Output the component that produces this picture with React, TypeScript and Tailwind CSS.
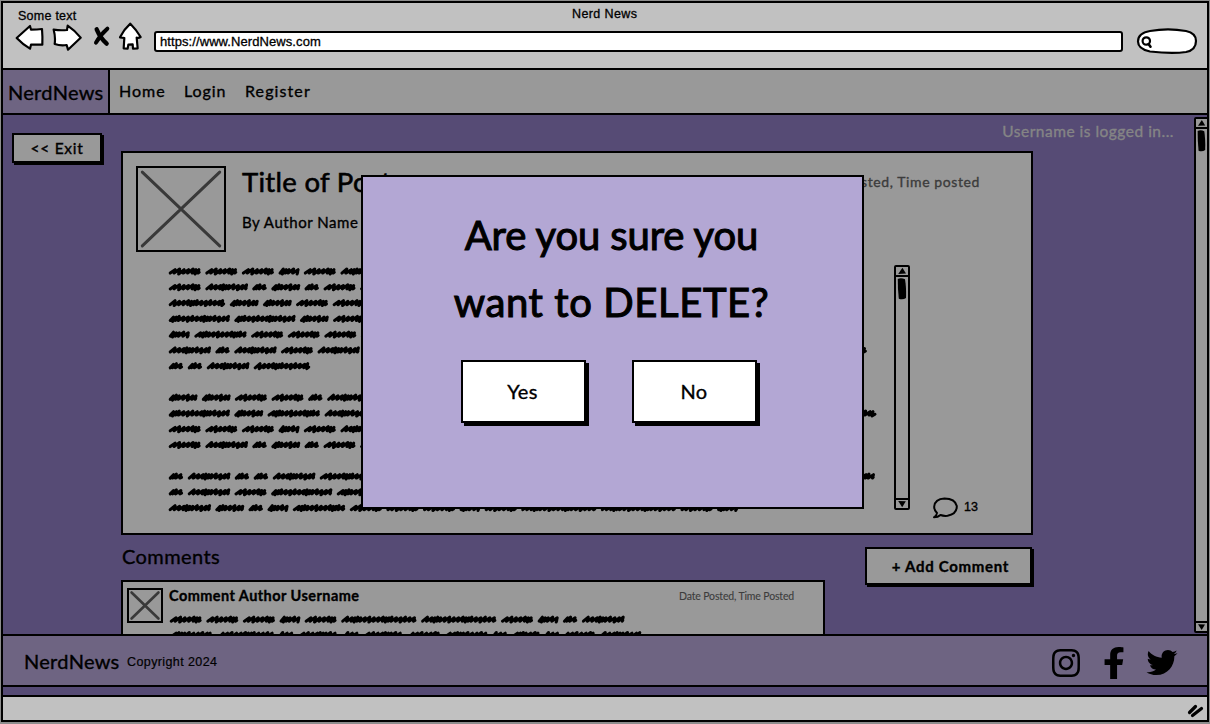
import React from "react";
import { FaFacebookF, FaInstagram, FaTwitter } from "react-icons/fa";

const GAP = 4.6;

function wordPath(x: number, y: number, width: number): string {
  const end = x + width - 0.8;
  let cx = x + 2.2;
  let d = `M${cx} ${y + 1.6}`;
  let i = Math.round(width);
  while (cx < end - 2.5) {
    const dense = i % 8 > 4;
    const step = dense ? 2.9 : 4.5;
    const top = y - (i % 3 === 0 ? 2.5 : 1.8);
    const bottom = y + (i % 4 === 1 ? 2.5 : 1.6);
    const nx = Math.min(cx + step, end);
    d += `L${(nx + 0.4).toFixed(1)} ${top.toFixed(1)}L${(nx - 0.6).toFixed(1)} ${bottom.toFixed(1)}`;
    cx = nx;
    i += 1;
  }
  return d + `L${end} ${y + 0.8}`;
}

function Scribble({ lines, className }: { lines: { y: number; words: number[] }[]; className: string }) {
  return (
    <svg className={className} fill="none" stroke="#000" strokeWidth="3" strokeLinecap="round" strokeLinejoin="round">
      {lines.map(({ y, words }) => {
        let x = 0;
        return words.map((w, i) => {
          const d = wordPath(x, y, w);
          x += w + GAP;
          return <path key={`${y}-${i}`} d={d} />;
        });
      })}
    </svg>
  );
}

const POST_LINES = [
  { y: 6.5, words: [32, 32, 32, 20.7, 32, 75, 75, 32, 20.5, 14, 42] },
  { y: 22.3, words: [32, 42.4, 14.4, 28.6, 14.4, 32, 42, 28, 52, 32] },
  { y: 38.1, words: [56.5, 28.5, 28.5, 32, 32, 61, 28, 42, 75] },
  { y: 53.9, words: [61, 61, 28.5, 32, 32, 52, 42, 14, 28] },
  { y: 69.6, words: [21, 52.2, 32, 32, 32, 61, 28, 42, 56] },
  { y: 85.4, words: [42, 14.4, 42, 32, 42, 61, 28, 75, 75, 32, 42, 52, 52, 49] },
  { y: 101.2, words: [14.4, 14.4, 42.4, 56.5] },
  { y: 132.7, words: [28.5, 28.5, 32, 32, 14.4, 42, 42, 61, 28, 75] },
  { y: 148.5, words: [61, 28.6, 52.4, 42, 61, 32, 42, 14, 75, 75, 32, 28, 61, 44] },
  { y: 164.2, words: [32, 32, 32, 20.7, 32, 75, 75, 32, 20.5] },
  { y: 180, words: [32, 42.4, 14.4, 28.6, 14.4, 32, 42, 61] },
  { y: 211.5, words: [14.4, 42.4, 14.4, 14.4, 42.4, 56, 42, 75, 32, 61, 28, 42, 61, 32, 28, 52] },
  { y: 227.3, words: [14.4, 42.2, 32, 61, 28, 42, 61, 32] },
  { y: 243.1, words: [42, 28.6, 14.4, 20.7, 52.4, 32, 32, 32, 20.5, 32, 75, 75, 32, 21] },
];

const COMMENT_LINES = [
  { y: 5.6, words: [32, 32, 32, 20.5, 32, 75.3, 75.3, 32, 20.7, 14.4, 42.4] },
  { y: 21, words: [44, 55, 15, 41, 15, 41, 31, 43, 15, 28, 15, 31, 42] },
];

function Placeholder({ className, inset, stroke }: { className: string; inset: number; stroke: number }) {
  return (
    <div className={className}>
      <svg className="block h-full w-full" viewBox="0 0 100 100" preserveAspectRatio="none" stroke="#393939" strokeLinecap="round">
        <path
          d={`M${inset} ${inset}L${100 - inset} ${100 - inset}M${100 - inset} ${inset}L${inset} ${100 - inset}`}
          strokeWidth={stroke}
          vectorEffect="non-scaling-stroke"
        />
      </svg>
    </div>
  );
}

function ScrollBar({ className }: { className: string }) {
  return (
    <div className={`flex flex-col items-stretch rounded-[2px] border-2 border-black bg-[#999999] ${className}`}>
      <svg className="block h-[8px] w-full" viewBox="0 0 12 8">
        <path d="M6.4 0.8L10 6.6L2.2 6.9Z" />
      </svg>
      <div className="h-[2px] bg-black" />
      <svg className="block h-[24px] w-full" viewBox="0 0 12 24" preserveAspectRatio="none">
        <path d="M1.8 2Q5 0.6 9 2.2Q10.4 10 10 21Q7 23.2 2.8 21.8Q1.7 12 1.8 2Z" />
      </svg>
      <div className="grow" />
      <div className="h-[2px] bg-black" />
      <svg className="block h-[8px] w-full" viewBox="0 0 12 8">
        <path d="M2.2 1L9.8 1.2L6.2 7.2Z" />
      </svg>
    </div>
  );
}

function BrowserHeader() {
  return (
    <header className="flex h-[67px] shrink-0 flex-col border-b-2 border-black bg-[#c1c1c1] font-['Liberation_Sans',Arial,sans-serif] [-webkit-text-stroke-width:0.3px]">
      <div className="grid h-[18px] grid-cols-[1fr_auto_1fr] text-[12.5px] leading-none">
        <span className="mt-[7px] pl-[15px] tracking-[0.25px]">Some text</span>
        <span className="mt-[5px] w-[66px] tracking-[0.4px] whitespace-nowrap">Nerd News</span>
      </div>
      <div className="flex pl-[12px]">
        <svg className="mt-[2px] h-[28px] w-[29px]" viewBox="45 68 87 84" fill="#fff" stroke="#000" strokeWidth="6.5" strokeLinejoin="round">
          <path d="M50 113L90 77L93 88Q112 88 126 86Q128 110 127 133L93 133L90 145Q68 132 50 113Z" />
        </svg>
        <svg className="mt-[2px] ml-[8px] h-[28px] w-[30px]" viewBox="156 68 90 84" fill="#fff" stroke="#000" strokeWidth="6.5" strokeLinejoin="round">
          <path d="M161 88Q182 91 201 89L203 76Q224 90 242 112L204 148L200 134Q182 137 164 131Q167 110 161 88Z" />
        </svg>
        <svg className="mt-[2px] ml-[11px] h-[28px] w-[18px]" viewBox="280 68 54 84" fill="none" stroke="#000" strokeLinecap="round">
          <path d="M291 87Q302 113 321 130" strokeWidth="13" />
          <path d="M323 85Q302 103 289 127" strokeWidth="12" />
        </svg>
        <svg className="mt-[1px] ml-[7px] h-[29px] w-[25px]" viewBox="353 68 75 87" fill="#fff" stroke="#000" strokeWidth="6.5" strokeLinejoin="round">
          <path d="M390 73Q407 90 421 113Q415 117 409 115L412 147L398 148L397 135L384 136L382 148L370 147L372 116L359 114Q371 90 390 73Z" />
        </svg>
        <div className="mt-[10px] ml-[11px] h-[21px] w-[969px] rounded-[3px] border-2 border-black bg-white pt-[2px] pl-[4px] text-[13px] leading-none tracking-[0.08px]">
          https://www.NerdNews.com
        </div>
        <svg className="mt-[7px] ml-[13px] h-[27px] w-[62px]" viewBox="0 0 62 27" fill="none" stroke="#000" strokeWidth="2.2" strokeLinecap="round">
          <path d="M14 3Q32 -0.3 50 3Q60 5 60 13Q60 22 50 24Q36 26 14 23.5Q2 21 2 13.5Q2 5 14 3Z" fill="#fff" />
          <circle cx="10.3" cy="13" r="3.7" />
          <path d="M12.5 16L14.5 18.7" strokeWidth="2.6" />
        </svg>
      </div>
    </header>
  );
}

function NavBar() {
  return (
    <nav className="flex h-[45px] shrink-0 border-b-2 border-black bg-[#999999] text-[16px] leading-none">
      <div className="w-[107px] border-r-2 border-black bg-[#6e6482] pt-[12px] pl-[5px] text-[20px] leading-none tracking-[0.3px]">
        NerdNews
      </div>
      <a className="mt-[13px] ml-[9px] w-[65px] tracking-[1px]">Home</a>
      <a className="mt-[13px] w-[61px] tracking-[0.9px]">Login</a>
      <a className="mt-[13px] tracking-[1.1px]">Register</a>
    </nav>
  );
}

function PostCard() {
  return (
    <article className="h-[384px] w-[912px] border-2 border-black bg-[#999999] pt-[13px] pl-[13px]">
      <div className="flex">
        <Placeholder className="h-[86px] w-[90px] border-2 border-black" inset={5} stroke={3} />
        <div className="ml-[16px] w-[596px] leading-none">
          <h1 className="pt-[2px] text-[27.5px] leading-none tracking-[0.3px] [-webkit-text-stroke-width:0.6px]">Title of Post</h1>
          <p className="mt-[19px] text-[15px] leading-none tracking-[0.55px]">By Author Name</p>
        </div>
        <p className="mt-[9px] flex w-[142px] justify-end text-[14px] leading-none tracking-[0.6px] whitespace-nowrap text-[#3c3c3c]">
          Date posted, Time posted
        </p>
      </div>
      <div className="mt-[13px] flex">
        <Scribble className="ml-[32px] h-[252px] w-[726px]" lines={POST_LINES} />
        <ScrollBar className="h-[245px] w-[16px]" />
        <div className="mt-[232px] ml-[22px] flex">
          <svg className="h-[23px] w-[27px]" viewBox="0 0 27 23" fill="none" stroke="#000" strokeWidth="2" strokeLinejoin="round">
            <path d="M5 16Q2 13 2.2 9.5Q3 2 12.5 1.5Q23 1.5 24.8 9Q25 17 15.5 18.8Q11.5 19.2 8.5 18Q6 20.3 2 20.3Q4.7 18.5 5 16Z" />
          </svg>
          <span className="mt-[4px] ml-[5px] font-['Liberation_Sans',Arial,sans-serif] text-[12.5px] leading-none">13</span>
        </div>
      </div>
    </article>
  );
}

function CommentCard() {
  return (
    <article className="flex h-[90px] w-[704px] border-2 border-black bg-[#999999] pl-[4px]">
      <Placeholder className="mt-[6px] h-[35px] w-[36px] border-2 border-black" inset={8} stroke={2.6} />
      <div className="ml-[6px]">
        <div className="mt-[7px] flex h-[25px]">
          <h3 className="w-[510px] text-[14.5px] leading-none font-bold tracking-[0.44px]">Comment Author Username</h3>
          <time className="mt-[2px] text-[10.5px] leading-none tracking-[-0.15px] whitespace-nowrap text-[#3c3c3c] [-webkit-text-stroke-width:0.1px]">
            Date Posted, Time Posted
          </time>
        </div>
        <Scribble className="h-[40px] w-[500px]" lines={COMMENT_LINES} />
      </div>
    </article>
  );
}

function ConfirmDialog() {
  return (
    <div role="dialog" className="absolute top-[175px] left-[361px] flex h-[334px] w-[503px] flex-col items-center border-2 border-black bg-[#b3a7d4]">
      <h2 className="mt-[25px] mr-[2px] text-center text-[40px] leading-[67px] whitespace-nowrap [-webkit-text-stroke-width:1.1px]">
        <span className="tracking-[-0.1px]">Are you sure you</span>
        <br />
        <span className="tracking-[0.6px]">want to DELETE?</span>
      </h2>
      <div className="mt-[24px] mr-[7px] flex gap-[46px] text-[20px] tracking-[0.4px]">
        <button className="h-[63px] w-[125px] border-2 border-black bg-white pr-[2px] pb-[1px] shadow-[3px_3px_0_#000]">Yes</button>
        <button className="h-[63px] w-[125px] border-2 border-black bg-white pr-[1px] pb-[1px] shadow-[3px_3px_0_#000]">No</button>
      </div>
    </div>
  );
}

function Footer() {
  return (
    <footer className="flex h-[53px] shrink-0 border-y-2 border-black bg-[#6e6482] leading-none">
      <span className="mt-[15px] ml-[21px] w-[103px] text-[20px] leading-none tracking-[0.3px]">NerdNews</span>
      <span className="mt-[20px] grow font-['Liberation_Sans',Arial,sans-serif] text-[12.5px] leading-none tracking-[0.4px] [-webkit-text-stroke-width:0.2px]">
        Copyright 2024
      </span>
      <FaInstagram className="mt-[11px] mr-[21px] h-[32px] w-[32px]" />
      <FaFacebookF className="mt-[11px] mr-[21px] h-[32px] w-[22px]" preserveAspectRatio="none" />
      <FaTwitter className="mt-[11px] mr-[29px] h-[31px] w-[32px]" />
    </footer>
  );
}

export default function App() {
  return (
    <div className="relative h-[724px] w-[1210px] overflow-hidden bg-[#8d8d8d] pt-[1px] pl-[1px] font-[Lato,'Open_Sans',sans-serif] text-black [-webkit-text-stroke:0.35px_currentColor]">
      <div className="flex h-[721px] w-[1208px] flex-col overflow-hidden border-2 border-black">
        <BrowserHeader />
        <NavBar />
        <main className="flex h-[519px] shrink-0 overflow-hidden bg-[#564b75]">
          <div className="w-[118px] shrink-0 pt-[18px] pl-[9px]">
            <button className="block h-[30px] w-[90px] border-2 border-black bg-[#999999] pt-[1px] text-[15.5px] leading-none tracking-[0.7px] shadow-[2px_2px_0_#000]">
              &lt;&lt; Exit
            </button>
          </div>
          <div className="w-[1073px] shrink-0">
            <div className="flex h-[36px] justify-end pt-[9px] pr-[20px] text-[15.5px] leading-none tracking-[0.5px] text-[#858585]">
              Username is logged in...
            </div>
            <PostCard />
            <div className="flex h-[45px] w-[911px] justify-between">
              <h2 className="mt-[11px] ml-[1px] text-[20px] leading-none tracking-[0.4px]">Comments</h2>
              <button className="mt-[12px] h-[38px] w-[167px] border-2 border-black bg-[#999999] pl-[4px] text-[15px] leading-none font-bold tracking-[0.7px] shadow-[2px_2px_0_#000]">
                + Add Comment
              </button>
            </div>
            <CommentCard />
          </div>
          <ScrollBar className="mt-[2px] h-[516px] w-[15px] shrink-0" />
        </main>
        <Footer />
        <div className="h-[8px] shrink-0 bg-[#564b75]" />
        <div className="flex grow justify-end border-t-2 border-black bg-[#c1c1c1]">
          <svg className="mt-[6px] mr-[3px] h-[16px] w-[17px]" viewBox="0 0 17 16" fill="none" stroke="#000" strokeWidth="3.2" strokeLinecap="round">
            <path d="M2.5 9.5L8.5 3.5M5.5 12.5L14.5 5.5" />
          </svg>
        </div>
      </div>
      <ConfirmDialog />
    </div>
  );
}
